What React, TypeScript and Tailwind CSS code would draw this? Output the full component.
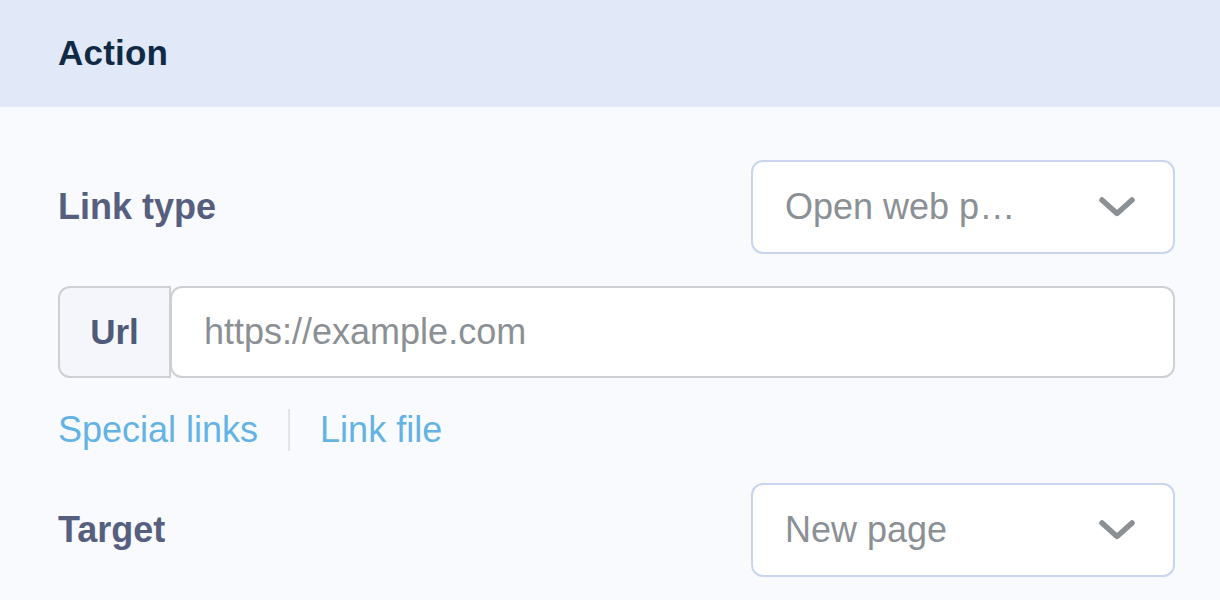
import React from 'react';

// Chevron used inside the select boxes
function Chevron() {
  return (
    <svg width="40" height="24" viewBox="0 0 40 24" fill="none" aria-hidden>
      <path d="M5 5 L20 18.5 L35 5" stroke="#8b9095" strokeWidth="5.5" strokeLinecap="round" strokeLinejoin="round" />
    </svg>
  );
}

function Select({ value }: { value: string }) {
  return (
    <div className="w-[424px] h-[94px] rounded-[12px] border-2 border-[#c9d5ef] bg-white flex items-center justify-between pl-[32px] pr-[36px]">
      <span className="text-[36px] text-[#8b9095] truncate">{value}</span>
      <Chevron />
    </div>
  );
}

export default function App() {
  return (
    <div className="w-[1220px] h-[600px] overflow-hidden bg-[#f9fafe] font-['Liberation_Sans',Arial,sans-serif]">
      {/* Section header */}
      <div className="h-[107px] bg-[#e1e8f7] flex items-center px-[58px]">
        <span className="text-[35px] font-bold text-[#0f2a45] tracking-[0.2px]">Action</span>
      </div>

      <div className="pl-[58px] pr-[45px] pt-[53px] flex flex-col">
        {/* Link type */}
        <div className="flex items-center justify-between">
          <span className="text-[36px] font-bold text-[#56607e]">Link type</span>
          <Select value="Open web p…" />
        </div>

        {/* Url input group */}
        <div className="flex mt-[32px] h-[92px]">
          <div className="w-[113px] shrink-0 flex items-center justify-center bg-[#f5f6fb] border-2 border-[#d0d0d2] rounded-l-[12px]">
            <span className="text-[35px] font-bold text-[#4e5a78]">Url</span>
          </div>
          <div className="flex-1 flex items-center bg-white border-2 border-[#cfcfd1] rounded-[12px] -ml-px pl-[32px]">
            <span className="text-[36px] text-[#8b9095]">https://example.com</span>
          </div>
        </div>

        {/* Helper links */}
        <div className="flex items-center mt-[28px] h-[48px]">
          <span className="text-[36px] text-[#63b3e4]">Special links</span>
          <span className="w-[2px] h-[42px] bg-[#e1e4ea] mx-[30px]" />
          <span className="text-[36px] text-[#63b3e4]">Link file</span>
        </div>

        {/* Target */}
        <div className="flex items-center justify-between mt-[29px]">
          <span className="text-[36px] font-bold text-[#56607e]">Target</span>
          <Select value="New page" />
        </div>
      </div>
    </div>
  );
}
